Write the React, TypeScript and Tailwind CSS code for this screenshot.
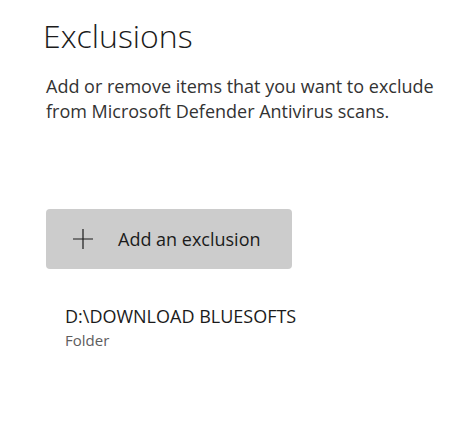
export default function App() {
  return (
    <div className="w-[471px] h-[427px] bg-white overflow-hidden" style={{ fontFamily: '"Open Sans", "Noto Sans", sans-serif' }}>
      <div className="pl-[43px] pt-[14px]">
        <h1 className="text-[32px] font-light leading-[44px] text-[#1b1b1b]">Exclusions</h1>
      </div>
      <div className="pl-[46px] pt-[16px] pr-4">
        <p className="text-[18px] leading-[25px] text-[#333333]">
          Add or remove items that you want to exclude from Microsoft Defender Antivirus scans.
        </p>
      </div>
      <div className="pl-[46px] pt-[85px]">
        <button className="flex h-[60px] w-[246px] items-center rounded-[4px] bg-[#cccccc] pl-[26px] text-[#1b1b1b]">
          <svg width="22" height="22" viewBox="0 0 22 22" className="shrink-0">
            <path d="M11 1v20M1 11h20" stroke="#1b1b1b" strokeWidth="1.2" fill="none" />
          </svg>
          <span className="ml-[24px] text-[18px]">Add an exclusion</span>
        </button>
      </div>
      <div className="pl-[65px] pt-[35px]">
        <div className="text-[18px] leading-[24px] text-[#1b1b1b]">D:\DOWNLOAD BLUESOFTS</div>
        <div className="text-[15px] leading-[24px] text-[#5d5d5d]">Folder</div>
      </div>
    </div>
  );
}
